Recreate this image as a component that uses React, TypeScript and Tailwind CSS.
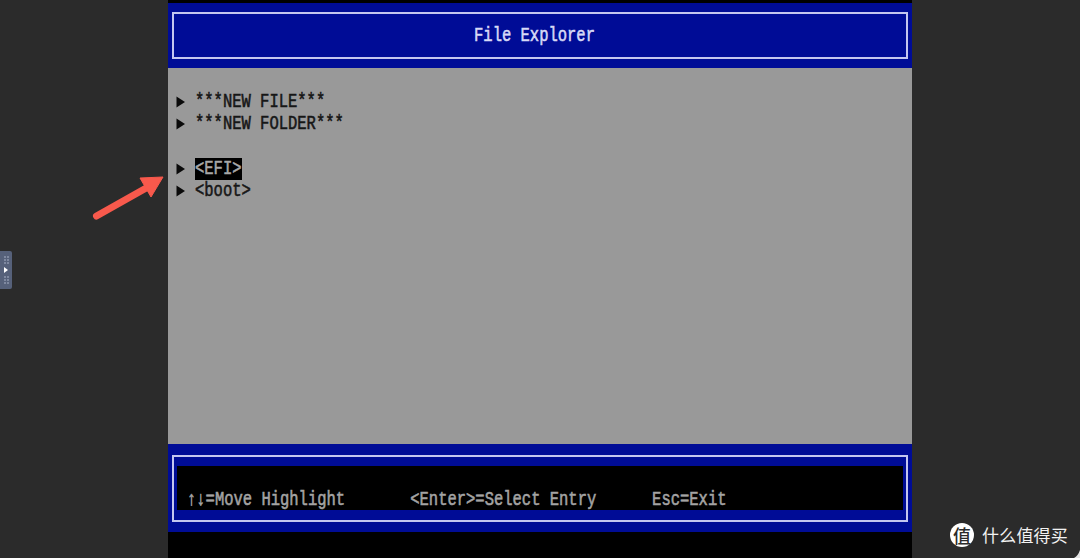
const mono = "font-['Liberation_Mono','DejaVu_Sans_Mono',monospace] text-[15.5px] leading-[22.2px] whitespace-pre [-webkit-text-stroke:0.45px_currentColor]";

function Row({ label, selected }: { label: string; selected?: boolean }) {
  return (
    <div className="flex h-[22.2px] items-center">
      <svg width="10" height="12" viewBox="0 0 10 12" className="ml-[8px] mr-[9px] shrink-0">
        <path d="M0.5 0.5 L9 6 L0.5 11.5 Z" fill="#0a0a0a" />
      </svg>
      <span className={`flex h-[22px] items-center ${selected ? "bg-black text-[#a8a8a8]" : "text-[#161616]"}`}>
        <span className={`${mono} inline-block scale-y-[1.28]`}>{label}</span>
      </span>
    </div>
  );
}

export default function App() {
  return (
    <div className="relative flex h-[558px] w-[1080px] overflow-hidden bg-[#2b2b2b]">
      <div className="w-[168px] shrink-0" />
      <main className="flex w-[744px] shrink-0 flex-col bg-black pt-[3px]">
        <header className="h-[65px] shrink-0 bg-[#000c96] px-[4px] pt-[9px]">
          <div className="flex h-[47px] items-center justify-center border-2 border-[#c4c6f0] pr-[11px]">
            <span className={`${mono} inline-block translate-y-[1px] scale-y-[1.28] text-[#d8daf6]`}>File Explorer</span>
          </div>
        </header>
        <section className="flex-1 bg-[#999999] pt-[23px]">
          <Row label="***NEW FILE***" />
          <Row label="***NEW FOLDER***" />
          <div className="h-[22.2px]" />
          <Row label="<EFI>" selected />
          <Row label="<boot>" />
        </section>
        <footer className="h-[88px] shrink-0 bg-[#000c96] px-[4px] pt-[11px]">
          <div className="h-[67px] border-2 border-[#c4c6f0] px-[3px] pt-[9px]">
            <div className="flex h-[44px] items-end bg-black pl-[10px]">
              <span className={`${mono} inline-block translate-y-[1px] scale-y-[1.28] text-[#a4a4a4]`}>
                {"↑↓=Move Highlight       <Enter>=Select Entry      Esc=Exit"}
              </span>
            </div>
          </div>
        </footer>
        <div className="h-[26px] shrink-0 bg-black" />
      </main>
      <div className="flex-1" />

      {/* annotation arrow */}
      <svg className="absolute left-[90px] top-[172px]" width="78" height="52" viewBox="0 0 78 52">
        <path d="M6.5 44 L58 15" stroke="#f8594c" strokeWidth="7" strokeLinecap="round" fill="none" />
        <path d="M50 6 L73 5 L61 25 Z" fill="#f8594c" stroke="#f8594c" strokeWidth="1" strokeLinejoin="round" />
      </svg>

      {/* side handle */}
      <div className="absolute left-0 top-[251px] flex h-[38px] w-[12px] flex-col items-center justify-center gap-[3px] rounded-r-[2px] bg-[#56617a]">
        <div className="grid grid-cols-2 gap-[1px]">
          {[0, 1, 2, 3, 4, 5].map((i) => <span key={i} className="h-[2px] w-[2px] bg-[#7f89a0]" />)}
        </div>
        <div className="h-0 w-0 border-y-[3px] border-l-[4px] border-y-transparent border-l-white" />
        <div className="grid grid-cols-2 gap-[1px]">
          {[0, 1, 2, 3, 4, 5].map((i) => <span key={i} className="h-[2px] w-[2px] bg-[#7f89a0]" />)}
        </div>
      </div>

      {/* watermark */}
      <div className="absolute left-[950px] top-[523px] flex items-center gap-[8px]">
        <div className="flex h-[24px] w-[24px] items-center justify-center rounded-full bg-white font-['Noto_Sans_CJK_SC',sans-serif] text-[18px] font-medium leading-none text-[#2b2b2b]">值</div>
        <span className="font-['Noto_Sans_CJK_SC',sans-serif] text-[17px] leading-[24px] tracking-[0.2px] text-[#f2f2f2]">什么值得买</span>
      </div>

      {/* bottom-right corner */}
      <svg className="absolute bottom-0 right-0" width="6" height="8" viewBox="0 0 6 8">
        <path d="M6 0 V8 H0 Q4 6 6 0 Z" fill="#e4e4e4" />
      </svg>
    </div>
  );
}
